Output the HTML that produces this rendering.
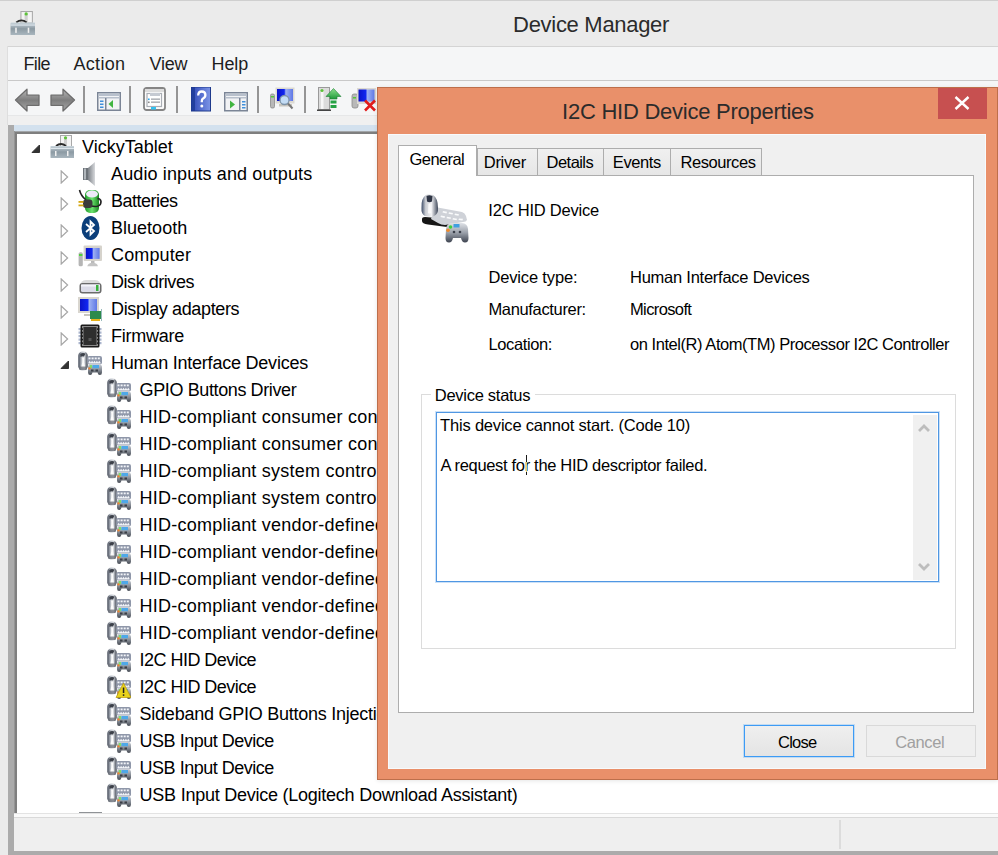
<!DOCTYPE html>
<html><head><meta charset="utf-8">
<style>
*{margin:0;padding:0;box-sizing:border-box}
html,body{width:998px;height:855px;overflow:hidden;background:#ebebeb;font-family:"Liberation Sans",sans-serif;position:relative}
.a{position:absolute}
.t{position:absolute;line-height:1;white-space:nowrap}
.clip{position:absolute;left:0;top:0;width:998px;height:855px}
</style></head><body>

<svg width="0" height="0" style="position:absolute">
<defs>
 <linearGradient id="gMouse" x1="0" x2="1" y1="0" y2="0">
  <stop offset="0" stop-color="#3f4654"/><stop offset="0.35" stop-color="#b9bec6"/><stop offset="0.65" stop-color="#d4d7dc"/><stop offset="1" stop-color="#3a404c"/>
 </linearGradient>
 <linearGradient id="gCase" x1="0" x2="0" y1="0" y2="1">
  <stop offset="0" stop-color="#c9d5dc"/><stop offset="0.5" stop-color="#8c9aa3"/><stop offset="1" stop-color="#a9b6be"/>
 </linearGradient>
 <linearGradient id="gScreen" x1="0" x2="1" y1="0" y2="0">
  <stop offset="0" stop-color="#0a12c8"/><stop offset="0.45" stop-color="#1026f0"/><stop offset="0.55" stop-color="#9db0f2"/><stop offset="1" stop-color="#5f78e6"/>
 </linearGradient>
 <linearGradient id="gBat" x1="0" x2="1" y1="0" y2="0">
  <stop offset="0" stop-color="#1f9a2a"/><stop offset="0.5" stop-color="#6de36f"/><stop offset="1" stop-color="#19861f"/>
 </linearGradient>
 <linearGradient id="gSpk" x1="0" x2="1" y1="0" y2="0">
  <stop offset="0" stop-color="#7d8288"/><stop offset="1" stop-color="#d7d9dc"/>
 </linearGradient>
 <linearGradient id="gHelp" x1="0" x2="1" y1="0" y2="0">
  <stop offset="0" stop-color="#2c46b5"/><stop offset="1" stop-color="#7d95e6"/>
 </linearGradient>
 <linearGradient id="gArrow" x1="0" x2="0" y1="0" y2="1">
  <stop offset="0" stop-color="#b8b8b8"/><stop offset="0.5" stop-color="#7d7d7d"/><stop offset="1" stop-color="#a8a8a8"/>
 </linearGradient>
 <linearGradient id="gGreenUp" x1="0" x2="0" y1="0" y2="1">
  <stop offset="0" stop-color="#8ee08e"/><stop offset="1" stop-color="#1f9a3a"/>
 </linearGradient>
 <linearGradient id="gPadS" x1="0" x2="0" y1="0" y2="1">
  <stop offset="0" stop-color="#c9cdd4"/><stop offset="0.5" stop-color="#8a9099"/><stop offset="1" stop-color="#454a53"/>
 </linearGradient>
 <symbol id="hid" viewBox="0 0 24 24">
  <rect x="0.3" y="0.5" width="9.4" height="19" rx="4.2" fill="url(#gMouse)"/>
  <path d="M2.2 3 Q4.5 1.2 7.5 2.5 L6 5.5 Q4 5 2.5 6 Z" fill="#3c4049"/>
  <path d="M4 6.5 h2.4 q-0.6 3 -0.2 5 l0.8 4.5 q-1.8 1 -3.6 0 l0.8 -4.5 q0.4 -2 -0.2 -5z" fill="#fbfbfb"/>
  <rect x="1" y="15.5" width="8" height="3.5" rx="1.5" fill="#6a6e76" opacity="0.7"/>
  <rect x="9.2" y="5" width="14.8" height="8.5" rx="2" fill="#8f97a9"/>
  <g fill="#f2f4f8"><rect x="10.5" y="6.5" width="2" height="1.8"/><rect x="13.6" y="6.5" width="2" height="1.8"/><rect x="16.7" y="6.5" width="2" height="1.8"/><rect x="19.8" y="6.5" width="2" height="1.8"/>
  <path d="M10.5 11.5 l1.2 -1.8 l1.2 1.8 l1.2 -1.8 l1.2 1.8 l1.2 -1.8 l1.2 1.8 l1.2 -1.8 l1.2 1.8 l1.2 -1.8 l1.2 1.8 v1 h-12z"/></g>
  <path d="M10 15.5 Q10 13.5 12.5 13.5 H21.5 Q24 13.5 24 16 V21.5 Q24 24 21.8 24 Q20 24 19.5 21.5 H14.5 Q14 24 12.2 24 Q10 24 10 21.5 Z" fill="url(#gPadS)"/>
  <rect x="14.5" y="14" width="6.5" height="3.2" fill="#4ea8e8"/>
  <rect x="11.8" y="14" width="2.2" height="3" fill="#7fdc6a"/>
  <rect x="10.3" y="16.2" width="2.4" height="2.4" rx="1" fill="#ef8430"/>
  <rect x="13" y="18.5" width="2.5" height="2" fill="#3a3e46"/><rect x="17.5" y="18.5" width="2.5" height="2" fill="#3a3e46"/>
 </symbol>
 <symbol id="hidw" viewBox="0 0 24 24">
  <rect x="0.3" y="0.5" width="9.4" height="19" rx="4.2" fill="url(#gMouse)"/>
  <path d="M2.2 3 Q4.5 1.2 7.5 2.5 L6 5.5 Q4 5 2.5 6 Z" fill="#3c4049"/>
  <path d="M4 6.5 h2.4 q-0.6 3 -0.2 5 l0.8 4.5 q-1.8 1 -3.6 0 l0.8 -4.5 q0.4 -2 -0.2 -5z" fill="#fbfbfb"/>
  <rect x="1" y="15.5" width="8" height="3.5" rx="1.5" fill="#6a6e76" opacity="0.7"/>
  <rect x="9.2" y="5" width="14.8" height="8.5" rx="2" fill="#8f97a9"/>
  <g fill="#f2f4f8"><rect x="10.5" y="6.5" width="2" height="1.8"/><rect x="13.6" y="6.5" width="2" height="1.8"/><rect x="16.7" y="6.5" width="2" height="1.8"/><rect x="19.8" y="6.5" width="2" height="1.8"/>
  <path d="M10.5 11.5 l1.2 -1.8 l1.2 1.8 l1.2 -1.8 l1.2 1.8 l1.2 -1.8 l1.2 1.8 l1.2 -1.8 l1.2 1.8 l1.2 -1.8 l1.2 1.8 v1 h-12z"/></g>
  <path d="M10 15.5 Q10 13.5 12.5 13.5 H21.5 Q24 13.5 24 16 V21.5 Q24 24 21.8 24 Q20 24 19.5 21.5 H14.5 Q14 24 12.2 24 Q10 24 10 21.5 Z" fill="url(#gPadS)"/>
  <rect x="14.5" y="14" width="6.5" height="3.2" fill="#4ea8e8"/>
  <rect x="11.8" y="14" width="2.2" height="3" fill="#7fdc6a"/>
  <rect x="10.3" y="16.2" width="2.4" height="2.4" rx="1" fill="#ef8430"/>
  <rect x="13" y="18.5" width="2.5" height="2" fill="#3a3e46"/><rect x="17.5" y="18.5" width="2.5" height="2" fill="#3a3e46"/>
  <path d="M16.5 8 L24 22.5 L9 22.5 Z" fill="#e8d21c" stroke="#b99a08" stroke-width="0.7" stroke-linejoin="round"/>
  <rect x="15.8" y="12.5" width="1.5" height="5.5" fill="#222"/>
  <rect x="15.8" y="19.3" width="1.5" height="1.6" fill="#222"/>
 </symbol>
 <symbol id="case" viewBox="0 0 24 24">
  <rect x="10.5" y="0.5" width="11" height="11" fill="#f4f4f4" stroke="#a9a9a9" stroke-width="1"/>
  <rect x="14" y="3" width="3" height="9" fill="#cfcfcf"/>
  <circle cx="15.5" cy="2.8" r="1.6" fill="#5dc13a"/>
  <path d="M6 11 q5 -4 10 0" fill="none" stroke="#2a2a2a" stroke-width="1.8"/>
  <rect x="0.5" y="11" width="24" height="12" rx="0.5" fill="url(#gCase)"/>
  <rect x="0.5" y="13" width="24" height="1" fill="#dfe8ee"/>
  <rect x="5" y="16" width="1.5" height="5" fill="#f0f0f0"/>
  <rect x="17" y="16" width="1.5" height="5" fill="#f0f0f0"/>
 </symbol>
 <symbol id="spk" viewBox="0 0 24 24">
  <rect x="5" y="6" width="5" height="12" fill="#6d7379"/>
  <rect x="6" y="6.5" width="2" height="11" fill="#b0b6bb"/>
  <path d="M10 6 L17 0 V24 L10 18 Z" fill="url(#gSpk)"/>
 </symbol>
 <symbol id="bat" viewBox="0 0 24 24">
  <rect x="7" y="1" width="14" height="23" rx="5" fill="url(#gBat)"/>
  <ellipse cx="14" cy="5" rx="6" ry="3.5" fill="#eeeaf8"/>
  <path d="M1.5 1 Q3 7 8 11" stroke="#222" stroke-width="1.6" fill="none"/>
  <path d="M13 17 Q23 19 23 12.5 Q22.5 9.5 19.5 9.5" stroke="#222" stroke-width="1.6" fill="none"/>
  <rect x="5" y="10.5" width="9.5" height="8.5" rx="3" fill="#3b3b3b"/>
  <rect x="0.5" y="12" width="5" height="1.8" fill="#d6a80f"/>
  <rect x="0.5" y="15.5" width="5" height="1.8" fill="#d6a80f"/>
 </symbol>
 <symbol id="bt" viewBox="0 0 24 24">
  <ellipse cx="12.5" cy="12" rx="9" ry="12" fill="#0b3e7a"/>
  <path d="M8 8 L16 15 L12.5 18.5 V5.5 L16 9 L8 16" fill="none" stroke="#fff" stroke-width="1.8"/>
 </symbol>
 <symbol id="comp" viewBox="0 0 24 24">
  <rect x="0.6" y="9.2" width="4.2" height="14" rx="1.5" fill="#b5b5b5"/>
  <rect x="1" y="11" width="3.4" height="2" fill="#52d23a"/>
  <rect x="5.6" y="2.6" width="18.4" height="15.4" rx="1" fill="#d6d3cc"/>
  <rect x="7.8" y="5" width="13.8" height="10.9" fill="url(#gScreen)"/>
  <rect x="13" y="18" width="3.5" height="2.2" fill="#b9b9b9"/>
  <path d="M9.3 23.3 Q10 20 14.5 19.8 Q19.5 20 19.9 23.3 Z" fill="#c4c4c4"/>
 </symbol>
 <symbol id="disk" viewBox="0 0 24 24">
  <path d="M4 11.5 Q5 10 8 10 H17 Q20 10 21 11.5 L22.5 14 H2.5 Z" fill="#dcdcdc"/>
  <rect x="1.5" y="13" width="22" height="10.5" rx="3" fill="#6b6b6b"/>
  <rect x="3" y="14.5" width="19" height="7.5" rx="1.5" fill="#dcdce8"/>
  <rect x="3" y="14.5" width="19" height="2" fill="#f4f4fa"/>
  <rect x="18" y="15" width="2.5" height="6" fill="#39b23a"/>
 </symbol>
 <symbol id="disp" viewBox="0 0 24 24">
  <rect x="0" y="0" width="21" height="16" fill="#d9d6cf"/>
  <rect x="2" y="2" width="17" height="12" fill="url(#gScreen)"/>
  <rect x="6" y="17" width="8" height="2" fill="#c8c5be"/>
  <rect x="12" y="14" width="11" height="8" fill="#2c8a4b"/>
  <rect x="13" y="22" width="9" height="2" fill="#e7b21a"/>
  <rect x="23" y="12" width="1" height="12" fill="#9bb"/>
 </symbol>
 <symbol id="fw" viewBox="0 0 24 24">
  <g fill="#a9b4cc"><rect x="0.5" y="4" width="3" height="2.2"/><rect x="0.5" y="7.5" width="3" height="2.2"/><rect x="0.5" y="11" width="3" height="2.2"/><rect x="0.5" y="14.5" width="3" height="2.2"/><rect x="0.5" y="18" width="3" height="2.2"/>
  <rect x="20.5" y="4" width="3" height="2.2"/><rect x="20.5" y="7.5" width="3" height="2.2"/><rect x="20.5" y="11" width="3" height="2.2"/><rect x="20.5" y="14.5" width="3" height="2.2"/><rect x="20.5" y="18" width="3" height="2.2"/></g>
  <rect x="2.5" y="0.5" width="19" height="23" rx="1.5" fill="#1a1a1a"/>
  <rect x="4" y="2" width="16" height="20" fill="#8a8a8a"/>
  <rect x="5.5" y="3" width="13" height="18" fill="#2e2e2e"/>
  <g fill="#1a1a1a"><rect x="3" y="4.3" width="2" height="1.6"/><rect x="3" y="7.8" width="2" height="1.6"/><rect x="3" y="11.3" width="2" height="1.6"/><rect x="3" y="14.8" width="2" height="1.6"/><rect x="3" y="18.3" width="2" height="1.6"/>
  <rect x="19" y="4.3" width="2" height="1.6"/><rect x="19" y="7.8" width="2" height="1.6"/><rect x="19" y="11.3" width="2" height="1.6"/><rect x="19" y="14.8" width="2" height="1.6"/><rect x="19" y="18.3" width="2" height="1.6"/></g>
  <rect x="10.5" y="14" width="3" height="3" fill="#555"/>
 </symbol>

 <linearGradient id="gMouseB" x1="0" x2="1" y1="0" y2="0">
  <stop offset="0" stop-color="#3b4a66"/><stop offset="0.25" stop-color="#c9ccd2"/><stop offset="0.6" stop-color="#f4f4f6"/><stop offset="1" stop-color="#3d4658"/>
 </linearGradient>
 <linearGradient id="gPad" x1="0" x2="0" y1="0" y2="1">
  <stop offset="0" stop-color="#dfe2e7"/><stop offset="0.5" stop-color="#9aa0aa"/><stop offset="1" stop-color="#3e4450"/>
 </linearGradient>
 <symbol id="bighid" viewBox="0 0 50 50">
  <path d="M3 26 Q3 24 6 24 L19 25 L33 29 L33 33.5 Q32 34.5 28 34 L9 31.5 Q3 30.5 3 28 Z" fill="#161616"/>
  <path d="M16 14 L43 19 Q46 20 47 23 L48 27 Q47 29 44 29 L26 32 Q22 32 19 30 L12 26 Z" fill="#cfd2d8"/>
  <g fill="#fafbfc">
   <path d="M24 18 l4 0.8 l-0.5 1.6 l-4 -0.8z"/><path d="M30 19.2 l4 0.8 l-0.5 1.6 l-4 -0.8z"/><path d="M36 20.4 l4 0.8 l-0.5 1.6 l-4 -0.8z"/>
   <path d="M22 22.5 l4 0.8 l-0.5 1.6 l-4 -0.8z"/><path d="M28 23.7 l4 0.8 l-0.5 1.6 l-4 -0.8z"/><path d="M34 24.9 l4 0.8 l-0.5 1.6 l-4 -0.8z"/><path d="M40 25.5 l4 0.3 l-0.5 1.6 l-4 -0.3z"/>
  </g>
  <path d="M2.5 15 Q2 5 7 2 Q10.5 0.5 14 2 Q19 5 19 15 Q19.5 21 15 23 Q10.5 24.5 6 23 Q2 21 2.5 15 Z" fill="url(#gMouseB)"/>
  <path d="M7.5 3 Q10.5 1.5 13.5 3 L13 8.5 Q10.5 10 8 8.5 Z" fill="#2e3444"/>
  <path d="M9.5 11 Q10.5 10 11.5 11 L12 20 Q10.5 21 9 20 Z" fill="#ffffff" opacity="0.8"/>
  <path d="M27 36 Q27.5 30.5 33 30 H43 Q48.5 30.5 49 36 L49.5 45 Q49.5 49.5 46 49.5 Q43 49.5 42 45 H34 Q33 49.5 30 49.5 Q26.5 49.5 26.5 45 Z" fill="url(#gPad)"/>
  <rect x="34.5" y="31" width="6" height="3.5" fill="#3f9fe0"/>
  <circle cx="31.5" cy="34" r="1.8" fill="#3fcf3f"/>
  <circle cx="29" cy="37.3" r="1.8" fill="#f08a2a"/>
  <circle cx="35" cy="39" r="1.3" fill="#3a3f4a"/><circle cx="41" cy="39" r="1.3" fill="#3a3f4a"/>
 </symbol>
</defs></svg>

<!-- main window frame -->
<div class="a" style="left:0;top:0;width:998px;height:1px;background:#cfcfcf"></div>
<svg class="a" style="left:10px;top:11px" width="25" height="25"><use href="#case"/></svg>
<div class="t" style="left:513.1px;top:14.04px;font-size:22px;letter-spacing:-0.3px;color:#2b2b2b">Device Manager</div>
<!-- menu bar -->
<div class="a" style="left:7px;top:46px;width:991px;height:1px;background:#d4d4d4"></div>
<div class="a" style="left:7px;top:46px;width:1px;height:79px;background:#dedede"></div>
<div class="a" style="left:8px;top:47px;width:990px;height:33px;background:#f5f6f7"></div>
<div class="t" style="left:23.5px;top:54.5px;font-size:18px;letter-spacing:-0.67px;color:#1e1e1e">File</div>
<div class="t" style="left:73.5px;top:54.5px;font-size:18px;letter-spacing:0.3px;color:#1e1e1e">Action</div>
<div class="t" style="left:149.5px;top:54.5px;font-size:18px;letter-spacing:-0.25px;color:#1e1e1e">View</div>
<div class="t" style="left:211.5px;top:54.5px;font-size:18px;letter-spacing:-0.07px;color:#1e1e1e">Help</div>
<div class="a" style="left:8px;top:80px;width:990px;height:1px;background:#c9c9c9"></div>
<!-- toolbar -->
<div class="a" style="left:8px;top:81px;width:990px;height:34px;background:#f5f6f7"></div>
<!-- back/forward -->
<svg class="a" style="left:14px;top:88px" width="28" height="25" viewBox="0 0 28 25"><path d="M1.5 12 L13 1.3 V7.2 H25 V17.3 H13 V23 Z" fill="url(#gArrow)" stroke="#6d6d6d" stroke-width="1.3" stroke-linejoin="round"/></svg>
<svg class="a" style="left:48px;top:88px" width="28" height="25" viewBox="0 0 28 25"><path d="M26.5 12 L15 1.3 V7.2 H3 V17.3 H15 V23 Z" fill="url(#gArrow)" stroke="#6d6d6d" stroke-width="1.3" stroke-linejoin="round"/></svg>
<!-- separators -->
<div class="a" style="left:83px;top:86px;width:2px;height:27px;background:#959595"></div>
<div class="a" style="left:129px;top:86px;width:2px;height:27px;background:#959595"></div>
<div class="a" style="left:176px;top:86px;width:2px;height:27px;background:#959595"></div>
<div class="a" style="left:257px;top:86px;width:2px;height:27px;background:#959595"></div>
<div class="a" style="left:304px;top:86px;width:2px;height:27px;background:#959595"></div>
<!-- show/hide console tree -->
<svg class="a" style="left:97px;top:92px" width="24" height="19" viewBox="0 0 24 19">
 <rect x="0.75" y="0.75" width="22.5" height="17.5" fill="#f2f3f5" stroke="#7b8596" stroke-width="1.5"/>
 <rect x="1.5" y="1.5" width="21" height="2.5" fill="#b8c0cc"/>
 <rect x="1.5" y="5" width="21" height="1.5" fill="#b8c0cc"/>
 <rect x="8" y="6" width="1.5" height="12" fill="#7b8596"/>
 <rect x="3" y="8.5" width="3.5" height="1.5" fill="#3f8fdc"/><rect x="3" y="11.5" width="3.5" height="1.5" fill="#3f8fdc"/><rect x="3" y="14.5" width="3.5" height="1.5" fill="#3f8fdc"/>
 <path d="M11.5 12 L16 8 V16 Z" fill="#41b541"/>
</svg>
<!-- properties -->
<svg class="a" style="left:143px;top:87px" width="23" height="24" viewBox="0 0 23 24">
 <rect x="1" y="1" width="21" height="22" rx="2.5" fill="#fbfbfb" stroke="#858585" stroke-width="1.8"/>
 <rect x="2" y="2" width="19" height="3" fill="#dcdcdc"/>
 <rect x="4" y="6.5" width="14.5" height="13" fill="#fff" stroke="#a9aeb5" stroke-width="1.2"/>
 <rect x="7" y="6" width="10" height="3" fill="#c5cad2"/>
 <rect x="5" y="11.5" width="1.6" height="1.6" fill="#28a8ee"/>
 <rect x="8" y="11.5" width="9" height="1.3" fill="#a0a4aa"/>
 <rect x="5" y="14.5" width="1.6" height="1.6" fill="#888"/>
 <rect x="8" y="14.5" width="9" height="1.3" fill="#a0a4aa"/>
 <rect x="8" y="20" width="5" height="2.5" fill="#32c2f2"/>
</svg>
<!-- help -->
<svg class="a" style="left:191px;top:87px" width="20" height="25" viewBox="0 0 20 25">
 <rect x="0" y="0" width="19.5" height="24" fill="url(#gHelp)"/>
 <rect x="0" y="0" width="4" height="24" fill="#223f9e"/>
 <rect x="0" y="0" width="19.5" height="24" fill="none" stroke="#1e3a8c" stroke-width="1"/>
 <path d="M7.2 8.5 q0 -4 3.6 -4 q3.6 0 3.6 3.6 q0 2.3 -2.6 3.6 q-1 0.6 -1 2.6 v1" fill="none" stroke="#fff" stroke-width="2.3"/>
 <circle cx="10.8" cy="19" r="1.5" fill="#fff"/>
</svg>
<!-- show/hide action pane -->
<svg class="a" style="left:224px;top:92px" width="24" height="20" viewBox="0 0 24 20">
 <rect x="0.75" y="0.75" width="22.5" height="18" fill="#f2f3f5" stroke="#7b8596" stroke-width="1.5"/>
 <rect x="1.5" y="1.5" width="21" height="2.5" fill="#b8c0cc"/>
 <rect x="1.5" y="5" width="21" height="1.5" fill="#b8c0cc"/>
 <rect x="15" y="6" width="1.5" height="13" fill="#7b8596"/>
 <rect x="18" y="9" width="3.5" height="1.5" fill="#3f8fdc"/><rect x="18" y="12" width="3.5" height="1.5" fill="#3f8fdc"/><rect x="18" y="15" width="3.5" height="1.5" fill="#3f8fdc"/>
 <path d="M6 8.5 L11 12.5 L6 16.5 Z" fill="#41b541"/>
</svg>
<!-- scan -->
<svg class="a" style="left:270px;top:87px" width="25" height="23" viewBox="0 0 25 23">
 <rect x="0.5" y="7" width="4" height="14" rx="1.5" fill="#b8b8b8" stroke="#8a8a8a" stroke-width="0.8"/>
 <rect x="1" y="9" width="3" height="1.5" fill="#55c83a"/>
 <rect x="5.5" y="0.5" width="19" height="16" fill="#dcd9d2"/>
 <rect x="7" y="2" width="16" height="12" fill="url(#gScreen)"/>
 <rect x="9" y="17" width="13" height="2.5" fill="#c9c6bf"/>
 <circle cx="14.5" cy="13" r="4.5" fill="#c3dcf5" stroke="#7d93a8" stroke-width="1.3"/>
 <path d="M18 16.5 L22.5 21.5" stroke="#777" stroke-width="2"/>
</svg>
<!-- update driver -->
<svg class="a" style="left:316px;top:87px" width="26" height="25" viewBox="0 0 26 25">
 <rect x="2.5" y="0.5" width="11" height="22" fill="#dcdcdc" stroke="#9a9a9a" stroke-width="1"/>
 <rect x="5" y="3" width="2.5" height="19" fill="#f7f7f7"/>
 <circle cx="6" cy="3.5" r="1.6" fill="#5dc13a"/>
 <rect x="1" y="22.5" width="14" height="1.5" fill="#444"/>
 <path d="M17.5 1.5 L25 9.5 H21 V12 H14 V9.5 H10 Z" fill="url(#gGreenUp)" stroke="#1c7d34" stroke-width="0.6"/>
 <rect x="14.5" y="13.5" width="6" height="3" fill="#26a244"/>
 <rect x="14.5" y="18" width="6" height="3" fill="#26a244"/>
</svg>
<!-- uninstall -->
<svg class="a" style="left:351px;top:87px" width="26" height="25" viewBox="0 0 26 25">
 <rect x="1" y="7" width="6" height="14" rx="2" fill="#b8b8b8" stroke="#8a8a8a" stroke-width="0.8"/>
 <rect x="2" y="10" width="3" height="1.5" fill="#55c83a"/>
 <rect x="6" y="1" width="19" height="16" fill="#dcd9d2"/>
 <rect x="7.5" y="2.5" width="16" height="12" fill="url(#gScreen)"/>
 <path d="M14 13.5 L24 23.5 M24 13.5 L14 23.5" stroke="#e01b1b" stroke-width="2.6"/>
</svg>

<div class="a" style="left:8px;top:115px;width:990px;height:1px;background:#e6e7e8"></div>
<div class="a" style="left:8px;top:116px;width:990px;height:9px;background:#f0f0f0"></div>
<!-- gray frame -->
<div class="a" style="left:8px;top:125px;width:6px;height:730px;background:#ababab"></div>
<div class="a" style="left:8px;top:851px;width:990px;height:4px;background:#ababab"></div>
<!-- light blue strip -->
<div class="a" style="left:14px;top:125px;width:984px;height:6px;background:#d3e1ee"></div>
<!-- tree border -->
<div class="a" style="left:14px;top:131px;width:984px;height:1px;background:#a3a6a9"></div>
<div class="a" style="left:14px;top:131px;width:1px;height:682px;background:#959595"></div>
<div class="a" style="left:15px;top:132px;width:983px;height:2px;background:#7f7f7f"></div>
<div class="a" style="left:15px;top:132px;width:2px;height:681px;background:#7f7f7f"></div>
<!-- tree white -->
<div class="a" style="left:17px;top:134px;width:981px;height:679px;background:#fff"></div>
<div class="clip" style="clip-path:inset(134px 0 42px 17px)">
<svg class="a" style="left:31px;top:143.5px" width="10" height="10" viewBox="0 0 10 10"><path d="M8.5 1 V8.5 H1 Z" fill="#333" stroke="#333" stroke-width="1" stroke-linejoin="round"/></svg>
<svg class="a" style="left:50px;top:134.7px" width="24" height="24"><use href="#case"/></svg>
<div class="t" style="left:82px;top:138.36px;font-size:18px;letter-spacing:-0.001px;color:#000">VickyTablet</div>
<svg class="a" style="left:60px;top:169.5px" width="10" height="14" viewBox="0 0 10 14"><path d="M1.2 1 V13 L7.6 7 Z" fill="none" stroke="#a6a6a6" stroke-width="1.2"/></svg>
<svg class="a" style="left:78px;top:161.7px" width="24" height="24"><use href="#spk"/></svg>
<div class="t" style="left:111px;top:165.36px;font-size:18px;letter-spacing:0.131px;color:#000">Audio inputs and outputs</div>
<svg class="a" style="left:60px;top:196.5px" width="10" height="14" viewBox="0 0 10 14"><path d="M1.2 1 V13 L7.6 7 Z" fill="none" stroke="#a6a6a6" stroke-width="1.2"/></svg>
<svg class="a" style="left:78px;top:188.7px" width="24" height="24"><use href="#bat"/></svg>
<div class="t" style="left:111px;top:192.36px;font-size:18px;letter-spacing:-0.493px;color:#000">Batteries</div>
<svg class="a" style="left:60px;top:223.5px" width="10" height="14" viewBox="0 0 10 14"><path d="M1.2 1 V13 L7.6 7 Z" fill="none" stroke="#a6a6a6" stroke-width="1.2"/></svg>
<svg class="a" style="left:78px;top:215.7px" width="24" height="24"><use href="#bt"/></svg>
<div class="t" style="left:111px;top:219.36px;font-size:18px;letter-spacing:0.015px;color:#000">Bluetooth</div>
<svg class="a" style="left:60px;top:250.5px" width="10" height="14" viewBox="0 0 10 14"><path d="M1.2 1 V13 L7.6 7 Z" fill="none" stroke="#a6a6a6" stroke-width="1.2"/></svg>
<svg class="a" style="left:78px;top:242.7px" width="24" height="24"><use href="#comp"/></svg>
<div class="t" style="left:111px;top:246.36px;font-size:18px;letter-spacing:0.134px;color:#000">Computer</div>
<svg class="a" style="left:60px;top:277.5px" width="10" height="14" viewBox="0 0 10 14"><path d="M1.2 1 V13 L7.6 7 Z" fill="none" stroke="#a6a6a6" stroke-width="1.2"/></svg>
<svg class="a" style="left:78px;top:269.7px" width="24" height="24"><use href="#disk"/></svg>
<div class="t" style="left:111px;top:273.36px;font-size:18px;letter-spacing:-0.456px;color:#000">Disk drives</div>
<svg class="a" style="left:60px;top:304.5px" width="10" height="14" viewBox="0 0 10 14"><path d="M1.2 1 V13 L7.6 7 Z" fill="none" stroke="#a6a6a6" stroke-width="1.2"/></svg>
<svg class="a" style="left:78px;top:296.7px" width="24" height="24"><use href="#disp"/></svg>
<div class="t" style="left:111px;top:300.36px;font-size:18px;letter-spacing:-0.367px;color:#000">Display adapters</div>
<svg class="a" style="left:60px;top:331.5px" width="10" height="14" viewBox="0 0 10 14"><path d="M1.2 1 V13 L7.6 7 Z" fill="none" stroke="#a6a6a6" stroke-width="1.2"/></svg>
<svg class="a" style="left:78px;top:323.7px" width="24" height="24"><use href="#fw"/></svg>
<div class="t" style="left:111px;top:327.36px;font-size:18px;letter-spacing:-0.262px;color:#000">Firmware</div>
<svg class="a" style="left:60px;top:359.5px" width="10" height="10" viewBox="0 0 10 10"><path d="M8.5 1 V8.5 H1 Z" fill="#333" stroke="#333" stroke-width="1" stroke-linejoin="round"/></svg>
<svg class="a" style="left:78px;top:350.7px" width="24" height="24"><use href="#hid"/></svg>
<div class="t" style="left:111px;top:354.36px;font-size:18px;letter-spacing:-0.221px;color:#000">Human Interface Devices</div>
<svg class="a" style="left:107px;top:377.7px" width="24" height="24"><use href="#hid"/></svg>
<div class="t" style="left:139.6px;top:381.36px;font-size:18px;letter-spacing:-0.387px;color:#000">GPIO Buttons Driver</div>
<svg class="a" style="left:107px;top:404.7px" width="24" height="24"><use href="#hid"/></svg>
<div class="t" style="left:139.6px;top:408.36px;font-size:18px;letter-spacing:0.229px;color:#000">HID-compliant consumer control device</div>
<svg class="a" style="left:107px;top:431.7px" width="24" height="24"><use href="#hid"/></svg>
<div class="t" style="left:139.6px;top:435.36px;font-size:18px;letter-spacing:0.229px;color:#000">HID-compliant consumer control device</div>
<svg class="a" style="left:107px;top:458.7px" width="24" height="24"><use href="#hid"/></svg>
<div class="t" style="left:139.6px;top:462.36px;font-size:18px;letter-spacing:0.229px;color:#000">HID-compliant system controller</div>
<svg class="a" style="left:107px;top:485.7px" width="24" height="24"><use href="#hid"/></svg>
<div class="t" style="left:139.6px;top:489.36px;font-size:18px;letter-spacing:0.229px;color:#000">HID-compliant system controller</div>
<svg class="a" style="left:107px;top:512.7px" width="24" height="24"><use href="#hid"/></svg>
<div class="t" style="left:139.6px;top:516.36px;font-size:18px;letter-spacing:0.229px;color:#000">HID-compliant vendor-defined device</div>
<svg class="a" style="left:107px;top:539.7px" width="24" height="24"><use href="#hid"/></svg>
<div class="t" style="left:139.6px;top:543.36px;font-size:18px;letter-spacing:0.229px;color:#000">HID-compliant vendor-defined device</div>
<svg class="a" style="left:107px;top:566.7px" width="24" height="24"><use href="#hid"/></svg>
<div class="t" style="left:139.6px;top:570.36px;font-size:18px;letter-spacing:0.229px;color:#000">HID-compliant vendor-defined device</div>
<svg class="a" style="left:107px;top:593.7px" width="24" height="24"><use href="#hid"/></svg>
<div class="t" style="left:139.6px;top:597.36px;font-size:18px;letter-spacing:0.229px;color:#000">HID-compliant vendor-defined device</div>
<svg class="a" style="left:107px;top:620.7px" width="24" height="24"><use href="#hid"/></svg>
<div class="t" style="left:139.6px;top:624.36px;font-size:18px;letter-spacing:0.229px;color:#000">HID-compliant vendor-defined device</div>
<svg class="a" style="left:107px;top:647.7px" width="24" height="24"><use href="#hid"/></svg>
<div class="t" style="left:139.6px;top:651.36px;font-size:18px;letter-spacing:-0.538px;color:#000">I2C HID Device</div>
<svg class="a" style="left:107px;top:674.7px" width="24" height="24"><use href="#hidw"/></svg>
<div class="t" style="left:139.6px;top:678.36px;font-size:18px;letter-spacing:-0.538px;color:#000">I2C HID Device</div>
<svg class="a" style="left:107px;top:701.7px" width="24" height="24"><use href="#hid"/></svg>
<div class="t" style="left:139.6px;top:705.36px;font-size:18px;letter-spacing:-0.246px;color:#000">Sideband GPIO Buttons Injection Device</div>
<svg class="a" style="left:107px;top:728.7px" width="24" height="24"><use href="#hid"/></svg>
<div class="t" style="left:139.6px;top:732.36px;font-size:18px;letter-spacing:-0.492px;color:#000">USB Input Device</div>
<svg class="a" style="left:107px;top:755.7px" width="24" height="24"><use href="#hid"/></svg>
<div class="t" style="left:139.6px;top:759.36px;font-size:18px;letter-spacing:-0.492px;color:#000">USB Input Device</div>
<svg class="a" style="left:107px;top:782.7px" width="24" height="24"><use href="#hid"/></svg>
<div class="t" style="left:139.6px;top:786.36px;font-size:18px;letter-spacing:-0.243px;color:#000">USB Input Device (Logitech Download Assistant)</div>
<div class="a" style="left:79px;top:812px;width:23px;height:1px;background:#8f9296"></div>
</div>
<!-- status bar -->
<div class="a" style="left:14px;top:813px;width:984px;height:1px;background:#e3e3e3"></div>
<div class="a" style="left:14px;top:814px;width:984px;height:3px;background:#fafafa"></div>
<div class="a" style="left:14px;top:817px;width:984px;height:1px;background:#d9d9d9"></div>
<div class="a" style="left:14px;top:818px;width:984px;height:33px;background:#efefef"></div>
<div class="a" style="left:839px;top:820px;width:2px;height:29px;background:#dcdcdc"></div>

<!-- dialog -->
<div class="a" style="left:377px;top:87px;width:621px;height:693px;background:#e9906a;border:1px solid #bd6f4b;box-shadow:0 1px 4px rgba(0,0,0,0.10)"></div>
<div class="a" style="left:938px;top:88px;width:49px;height:31px;background:#c75050"></div>
<div class="t" style="left:562.1px;top:101.13px;font-size:22px;letter-spacing:-0.25px;color:#2b2b2b">I2C HID Device Properties</div>
<div class="a" style="left:388px;top:134px;width:598px;height:635px;background:#f0f0f0;border:1px solid #f8fafc"></div>
<!-- tabs -->
<div class="a" style="left:477px;top:148px;width:61px;height:28px;border:1px solid #adadad;border-bottom:none;background:linear-gradient(#f0f0f0,#e6e6e6)"></div>
<div class="a" style="left:537px;top:148px;width:67px;height:28px;border:1px solid #adadad;border-bottom:none;background:linear-gradient(#f0f0f0,#e6e6e6)"></div>
<div class="a" style="left:603px;top:148px;width:68px;height:28px;border:1px solid #adadad;border-bottom:none;background:linear-gradient(#f0f0f0,#e6e6e6)"></div>
<div class="a" style="left:670px;top:148px;width:92px;height:28px;border:1px solid #adadad;border-bottom:none;background:linear-gradient(#f0f0f0,#e6e6e6)"></div>
<!-- panel -->
<div class="a" style="left:398px;top:175px;width:576px;height:538px;border:1px solid #adadad;background:#fff"></div>
<!-- selected tab -->
<div class="a" style="left:398px;top:145px;width:79px;height:31px;border:1px solid #adadad;border-bottom:none;background:#fff"></div>
<!-- device header -->
<svg class="a" style="left:419px;top:193px" width="50" height="50"><use href="#bighid"/></svg>
<!-- group box -->
<div class="a" style="left:421px;top:394px;width:535px;height:255px;border:1px solid #dcdcdc"></div>
<div class="a" style="left:431px;top:385px;width:104px;height:20px;background:#fff"></div>
<!-- text box -->
<div class="a" style="left:436px;top:412px;width:503px;height:170px;border:1px solid #4f97e3;background:#fff;box-shadow:0 0 0 1px rgba(86,157,229,0.30)"></div>
<div class="a" style="left:913px;top:415px;width:24px;height:165px;background:#f0f0f0"></div>
<svg class="a" style="left:917px;top:422px" width="14" height="12" viewBox="0 0 14 12"><path d="M2 9 L7 4 L12 9" fill="none" stroke="#bdbdbd" stroke-width="2.8"/></svg>
<svg class="a" style="left:917px;top:561px" width="14" height="12" viewBox="0 0 14 12"><path d="M2 3 L7 8 L12 3" fill="none" stroke="#bdbdbd" stroke-width="2.8"/></svg>
<!-- buttons -->
<div class="a" style="left:744px;top:725px;width:110px;height:32px;border:1px solid #3d9bf5;background:linear-gradient(#efefef,#e4e4e4);box-shadow:0 0 0 1px rgba(61,155,245,0.25)"></div>
<div class="a" style="left:866px;top:725px;width:110px;height:32px;border:1px solid #d9d9d9;background:#efefef"></div>
<!-- close X -->
<svg class="a" style="left:954px;top:96px" width="16" height="14" viewBox="0 0 16 14"><path d="M1.5 1 L14.5 13 M14.5 1 L1.5 13" stroke="#fff" stroke-width="2.4"/></svg>
<div class="t" style="left:409.6px;top:151.23px;font-size:16.5px;letter-spacing:-0.614px;color:#000">General</div>
<div class="t" style="left:483.8px;top:154.43px;font-size:16.5px;letter-spacing:-0.316px;color:#000">Driver</div>
<div class="t" style="left:546.6px;top:154.43px;font-size:16.5px;letter-spacing:-0.548px;color:#000">Details</div>
<div class="t" style="left:612.8px;top:154.43px;font-size:16.5px;letter-spacing:-0.390px;color:#000">Events</div>
<div class="t" style="left:680.4px;top:154.43px;font-size:16.5px;letter-spacing:-0.418px;color:#000">Resources</div>
<div class="t" style="left:488.3px;top:202.13px;font-size:16.5px;letter-spacing:-0.214px;color:#000">I2C HID Device</div>
<div class="t" style="left:488.4px;top:268.83px;font-size:16.5px;letter-spacing:-0.149px;color:#000">Device type:</div>
<div class="t" style="left:488.4px;top:301.33px;font-size:16.5px;letter-spacing:-0.338px;color:#000">Manufacturer:</div>
<div class="t" style="left:488.4px;top:336.23px;font-size:16.5px;letter-spacing:-0.363px;color:#000">Location:</div>
<div class="t" style="left:630.0px;top:268.83px;font-size:16.5px;letter-spacing:-0.245px;color:#000">Human Interface Devices</div>
<div class="t" style="left:630.0px;top:301.33px;font-size:16.5px;letter-spacing:-0.625px;color:#000">Microsoft</div>
<div class="t" style="left:630.0px;top:336.23px;font-size:16.5px;letter-spacing:-0.448px;color:#000">on Intel(R) Atom(TM) Processor I2C Controller</div>
<div class="t" style="left:434.8px;top:387.33px;font-size:16.5px;letter-spacing:-0.280px;color:#000">Device status</div>
<div class="t" style="left:440.1px;top:417.43px;font-size:16.5px;letter-spacing:-0.194px;color:#000">This device cannot start. (Code 10)</div>
<div class="t" style="left:440.5px;top:457.43px;font-size:16.5px;letter-spacing:-0.323px;color:#000">A request for the HID descriptor failed.</div>
<div class="t" style="left:778.0px;top:733.63px;font-size:16.5px;letter-spacing:-0.757px;color:#000">Close</div>
<div class="t" style="left:895.3px;top:733.63px;font-size:16.5px;letter-spacing:-0.410px;color:#a0a0a0">Cancel</div>
<div class="a" style="left:526px;top:455px;width:1px;height:7px;background:#1a1a1a"></div>
<div class="a" style="left:526px;top:462px;width:1px;height:10px;background:#e0d27a"></div>
<div class="a" style="left:526px;top:472px;width:1px;height:3px;background:#1a1a1a"></div>

</body></html>
